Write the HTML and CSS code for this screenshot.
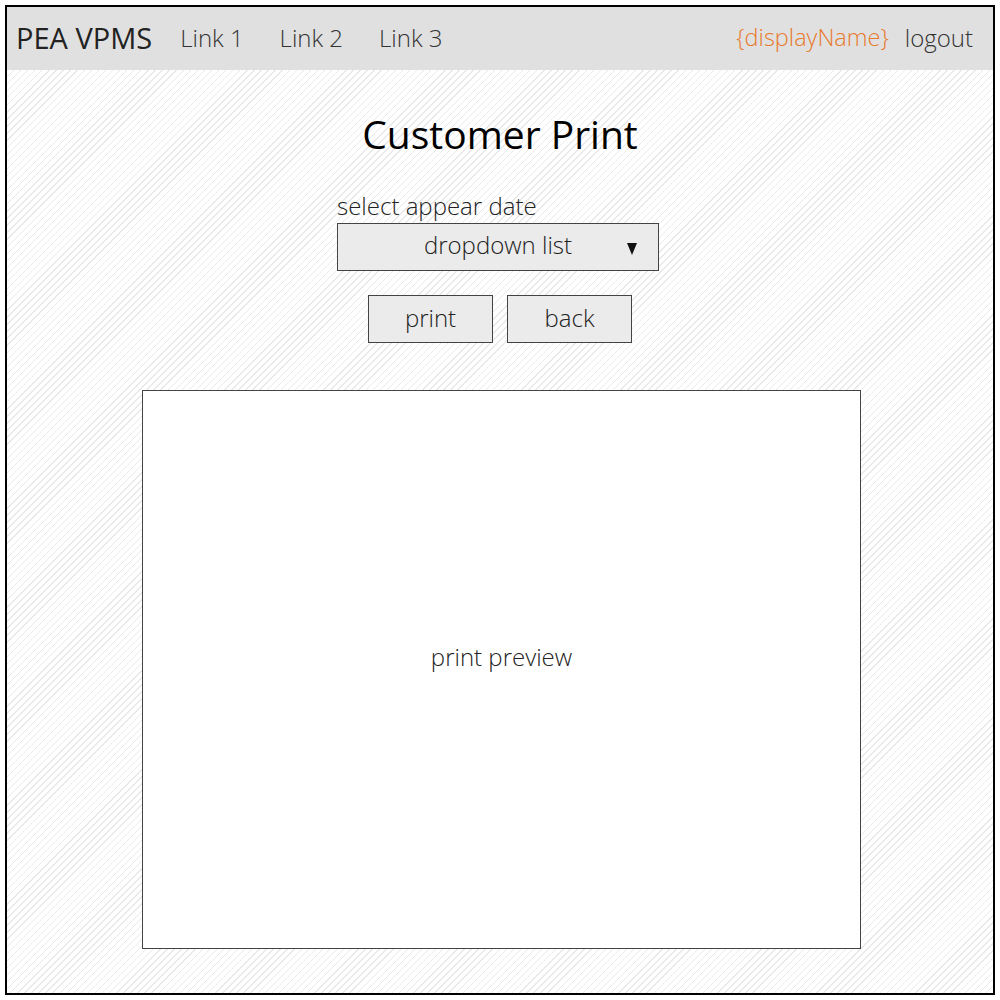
FILE: index.html
```html
<!DOCTYPE html>
<html>
<head>
<meta charset="utf-8">
<title>Customer Print</title>
<link rel="stylesheet" href="styles.css">
</head>
<body>
<div class="frame">
  <header class="topbar">
    <div class="brand">PEA VPMS</div>
    <nav class="links">
      <span class="link">Link 1</span>
      <span class="link">Link 2</span>
      <span class="link">Link 3</span>
    </nav>
    <div class="user">
      <span class="display-name">{displayName}</span>
      <span class="logout">logout</span>
    </div>
  </header>
  <main class="content">
    <h1 class="title">Customer Print</h1>
    <div class="field">
      <div class="label">select appear date</div>
      <div class="dropdown">dropdown list<span class="caret"></span></div>
    </div>
    <div class="actions">
      <div class="btn">print</div>
      <div class="btn">back</div>
    </div>
    <div class="preview">print preview</div>
  </main>
</div>
</body>
</html>
```
FILE: styles.css
```css
html, body {
  margin: 0;
  padding: 0;
  background: #fff;
}
body {
  font-family: "Open Sans", "Noto Sans", sans-serif;
  font-weight: 300;
  color: #222;
}
.frame {
  margin: 5px;
  height: 990px;
  box-sizing: border-box;
  border: 2px solid #000;
  background: repeating-linear-gradient(135deg, #ffffff 0 4px, #e9e9e9 4px 5px);
  display: flex;
  flex-direction: column;
}
.topbar {
  height: 63px;
  background: #e0e0e0;
  display: flex;
  align-items: center;
  padding: 0 20px 2px 9px;
  box-sizing: border-box;
}
.brand {
  font-size: 29px;
  font-weight: 400;
  color: #222;
  margin-right: 28px;
}
.links {
  display: flex;
  gap: 36px;
  font-size: 24px;
  color: #333;
}
.user {
  margin-left: auto;
  display: flex;
  gap: 16px;
  font-size: 24px;
}
.display-name {
  color: #e8792c;
  font-size: 23.5px;
}
.logout {
  color: #333;
}
.content {
  display: flex;
  flex-direction: column;
  align-items: center;
}
.title {
  margin: 42px 0 0;
  font-size: 39px;
  font-weight: 400;
  line-height: 44px;
  color: #000;
}
.field {
  width: 322px;
  margin-top: 36px;
  margin-left: -4px;
}
.label {
  font-size: 24px;
  line-height: 28px;
  color: #222;
}
.dropdown {
  position: relative;
  margin-top: 3px;
  height: 48px;
  box-sizing: border-box;
  border: 1px solid #444;
  background: #ebebeb;
  display: flex;
  align-items: center;
  justify-content: center;
  font-size: 24px;
  padding-bottom: 6px;
  color: #222;
}
.caret {
  position: absolute;
  right: 21px;
  top: 19px;
  width: 0;
  height: 0;
  border-left: 5.5px solid transparent;
  border-right: 5.5px solid transparent;
  border-top: 12px solid #111;
}
.actions {
  display: flex;
  gap: 14px;
  margin-top: 24px;
}
.btn {
  width: 125px;
  height: 48px;
  box-sizing: border-box;
  border: 1px solid #444;
  background: #ebebeb;
  display: flex;
  align-items: center;
  justify-content: center;
  font-size: 24px;
  padding-bottom: 4px;
  color: #222;
}
.preview {
  margin-top: 47px;
  margin-left: 3px;
  width: 719px;
  height: 559px;
  box-sizing: border-box;
  border: 1px solid #444;
  background: #fff;
  display: flex;
  align-items: center;
  justify-content: center;
  font-size: 24px;
  padding-bottom: 26px;
  color: #222;
}
```
